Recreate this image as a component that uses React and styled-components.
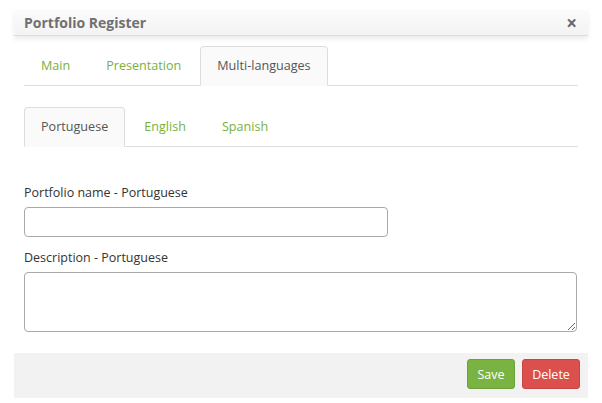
import React from "react";
import styled, { createGlobalStyle } from "styled-components";

const Global = createGlobalStyle`
  html, body { margin: 0; padding: 0; background: #fff; }
  body { font-family: "Open Sans", "Noto Sans", sans-serif; font-size: 12.5px; color: #333; }
  * { box-sizing: border-box; }
`;

const Modal = styled.div`
  width: 574px;
  margin: 10px 0 0 14px;
  background: #fff;
`;

const Header = styled.div`
  height: 26px;
  display: flex;
  align-items: center;
  justify-content: space-between;
  padding: 0 11px 0 10px;
  background: linear-gradient(#fbfbfb, #f3f3f3);
  border-bottom: 1px solid #dcdcdc;
  box-shadow: 0 3px 5px rgba(0, 0, 0, 0.08);
`;

const Title = styled.h3`
  margin: 0;
  font-size: 14px;
  font-weight: 700;
  color: #707070;
  line-height: 20px;
`;

const Close = styled.span`
  font-size: 19px;
  font-weight: 700;
  color: #6a6a72;
  line-height: 18px;
`;

const Body = styled.div`
  padding: 10px 10px 21px;
`;

const TabBar = styled.div`
  display: flex;
  border-bottom: 1px solid #ddd;
  margin-bottom: ${(p) => p.$mb || 0}px;
`;

const Tab = styled.div`
  padding: 10px 16px;
  margin-right: 2px;
  margin-bottom: -1px;
  line-height: 18px;
  font-size: 12.6px;
  border: 1px solid ${(p) => (p.$active ? "#ddd" : "transparent")};
  border-bottom-color: ${(p) => (p.$active ? "#fafafa" : "transparent")};
  border-radius: 4px 4px 0 0;
  background: ${(p) => (p.$active ? "#fafafa" : "transparent")};
  color: ${(p) => (p.$active ? "#555" : "#79b040")};
`;

const Field = styled.div`
  display: flex;
  flex-direction: column;
  margin-bottom: ${(p) => p.$mb || 0}px;
`;

const Label = styled.label`
  font-size: 12.5px;
  line-height: 18px;
  color: #333;
  margin-bottom: 5px;
`;

const Input = styled.input`
  width: 364px;
  height: 30px;
  border: 1px solid #a9a9a9;
  border-radius: 4px;
  font: inherit;
  padding: 4px 8px;
`;

const TextArea = styled.textarea`
  width: 553px;
  height: 60px;
  border: 1px solid #a9a9a9;
  border-radius: 4px;
  font: inherit;
  padding: 4px 8px;
  resize: both;
`;

const Footer = styled.div`
  height: 45px;
  background: #f2f2f2;
  display: flex;
  align-items: flex-start;
  justify-content: flex-end;
  gap: 7px;
  padding: 6px 8px 0;
`;

const Button = styled.button`
  height: 30px;
  width: ${(p) => p.$w}px;
  padding: 0;
  font-family: inherit;
  font-size: 12.5px;
  color: #fff;
  border-radius: 3px;
  border: 1px solid ${(p) => p.$border};
  background: ${(p) => p.$bg};
  cursor: pointer;
`;

export default function App() {
  return (
    <>
      <Global />
      <Modal>
        <Header>
          <Title>Portfolio Register</Title>
          <Close>×</Close>
        </Header>
        <Body>
          <TabBar $mb={21}>
            <Tab>Main</Tab>
            <Tab>Presentation</Tab>
            <Tab $active>Multi-languages</Tab>
          </TabBar>
          <TabBar $mb={37}>
            <Tab $active>Portuguese</Tab>
            <Tab>English</Tab>
            <Tab>Spanish</Tab>
          </TabBar>
          <Field $mb={12}>
            <Label>Portfolio name - Portuguese</Label>
            <Input type="text" />
          </Field>
          <Field>
            <Label>Description - Portuguese</Label>
            <TextArea />
          </Field>
        </Body>
        <Footer>
          <Button $bg="#79b443" $border="#6da23b" $w={48}>Save</Button>
          <Button $bg="#db4f4c" $border="#c94542" $w={58}>Delete</Button>
        </Footer>
      </Modal>
    </>
  );
}
